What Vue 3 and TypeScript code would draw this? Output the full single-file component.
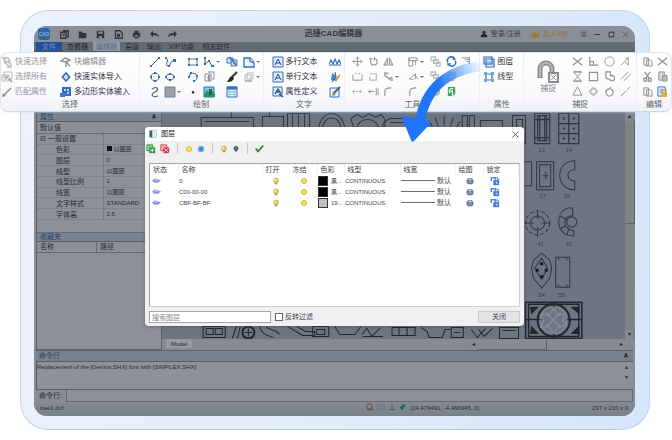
<script setup lang="ts">
import { h, ref } from 'vue'

interface Shape { d: string; s?: string; f?: string; w?: number }
interface Tool { icon: string; label: string; menu?: boolean }

const B = '#2f6fc0'
const G = '#8d8f92'
const L = '#b4b6b9'
const K = '#30343b'

const glyphs: Record<string, Shape[]> = {
  quick: [{ d: 'M2 2h5l2 3-4 1zM3 6l5 4M7 6l3 2v3H6', s: L, w: 1.4 }],
  all: [{ d: 'M3 1h8v7H3zM1 4h7v6H1z', s: L }, { d: 'M4 6h3M8 8l3 3', s: G, w: 1.4 }],
  match: [{ d: 'M3 9l7-7', s: G, w: 1.5 }, { d: 'M1 11l1-4 3 3z', f: G }],
  block: [{ d: 'M1 5l4-3 5 2-4 2zM6 5v6M6 6l4 4', s: G, w: 1.4 }],
  entity: [{ d: 'M6 2l3.5 4L6 10 2.5 6z', s: B, w: 1.8 }, { d: 'M5 5h2v2H5z', f: '#bcd8f5' }],
  poly4: [{ d: 'M2 1h9v9H2z', f: B }, { d: 'M4 3h2v2H4zM7 3h2v2H7zM7 6h2v2H7z', f: '#bcd8f5' }, { d: 'M0 7h5v4H0z', f: '#3c78c4' }],
  line: [{ d: 'M2.500 9.500L9.500 2.500', s: '#454b54' }, { d: 'M1 9h2v2H1zM9 1h2v2H9z', f: B }],
  pline: [{ d: 'M2 2c4 2-2 7 2 8 3 0 2-5 6-6', s: '#454b54' }, { d: 'M1 1h2v2H1zM9 3h3v3H9zM4 9h2v2H4z', f: B }],
  rect: [{ d: 'M2 3h8v6H2z', s: '#687684' }, { d: 'M1 2h2v2H1zM9 2h2v2H9zM1 8h2v2H1zM9 8h2v2H9z', f: B }],
  spline: [{ d: 'M2 2v6l4-3 3 5', s: '#454b54' }, { d: 'M1 1h2v2H1zM1 7h2v2H1zM5 4h2v2H5zM8 9h3v2H8z', f: B }],
  circle: [{ d: 'M6 2a4 4 0 1 0 .1 0', s: '#5a6570' }, { d: 'M5 1h2v2H5zM5 9h2v2H5zM1 5h2v2H1zM9 5h2v2H9z', f: B }],
  ellipse: [{ d: 'M6 3a4 3 0 1 0 .1 0', s: '#5a6570' }, { d: 'M5 2h2v2H5zM5 8h2v2H5zM1 5h2v2H1zM9 5h2v2H9z', f: B }],
  arc: [{ d: 'M2 6a4 4 0 1 1 5 4', s: '#5a6570' }, { d: 'M1 5h2v2H1zM3 1h2v2H3zM9 4h2v2H9zM6 9h2v2H6z', f: B }],
  region: [{ d: 'M2 3h6v7H2zM5 1h6v7H9', s: G }, { d: 'M4 5h3v3H4z', f: '#cfc9d9' }, { d: 'M6 4v6', s: '#777c94', w: 1.5 }],
  curve: [{ d: 'M3 3c5-4 8 1 3 3s-3 6 3 4', s: '#58616c', w: 1.2 }],
  hatch: [{ d: 'M1 1h10v10H1z', s: '#6887a5', f: '#9b9fa4' }],
  dot: [{ d: 'M6 5a1.300 1.300 0 1 0 .1 0', f: '#20242b' }],
  image: [{ d: 'M1 1h10v10H1z', s: B, f: '#7dc4e7' }, { d: 'M1 8l3-4 3 3 2-2 3 3v3H1z', f: '#2b9652' }, { d: 'M6 3h3v6H6z', f: '#246b3b' }],
  copy: [{ d: 'M1 2h6v5H1z', s: B, f: '#dbeaff' }, { d: 'M5 4h6v6H5z', s: '#687684', f: '#b8d5fb' }, { d: 'M3 1l4 4 3 4', s: B, w: 1.5 }],
  brush: [{ d: 'M11 1L6 6', s: K, w: 2 }, { d: 'M6 5l2 2c-1 3-3 4-7 4 2-2 2-5 5-6z', f: '#20242b' }],
  table: [{ d: 'M1 1h10v10H1z', s: B, f: '#e4f1ff' }, { d: 'M1 2h10', s: B, w: 3 }, { d: 'M1 6h10M1 8.500h10M4 3v8M8 3v8', s: '#76a9dd', w: .7 }],
  polygon: [{ d: 'M1 2h6v3l4 2v4H1z', s: B, f: '#eaf3ff', w: 1.3 }, { d: 'M7 1l4 5', s: '#5980aa' }],
  stack: [{ d: 'M4 2h6v6H4zM2 4h6v6H2z', s: L, f: '#fafafa' }, { d: 'M2 10h7', s: '#999999' }],
  mtext: [{ d: 'M1 1h10v10H1z', s: B, f: '#e0eeff' }, { d: 'M3 9l3-6 3 6M4 7h4', s: '#264d7b' }],
  attr: [{ d: 'M1 1h9v9H1z', s: B, f: '#e0eeff' }, { d: 'M3 8l3-5 3 5M4 6h3M7 8l4 3', s: '#264d7b', w: 1.3 }],
  aaa: [{ d: 'M0 8l2-4 2 4M4 8l2-5 2 5M8 8l2-4 2 4M0 9h12', s: B, w: 1.2 }],
  flame: [{ d: 'M3 2l3 2 1 6-5-1z', f: '#4b84c3' }, { d: 'M6 8l5-5v2L7 11z', f: '#c8963e' }, { d: 'M6 1l1 5-4 5', s: '#285787' }],
  note: [{ d: 'M1 2h9v9H1z', s: B, f: '#eaf3ff' }, { d: 'M4 8l7-7', s: '#56606b', w: 2 }, { d: 'M4 6l3 3-4 1z', f: '#7da84b' }],
  move: [{ d: 'M6 1v10M1 6h10M4 3l2-2 2 2M4 9l2 2 2-2M3 4L1 6l2 2M9 4l2 2-2 2', s: G }],
  rotate: [{ d: 'M3 3v4c0 4 7 4 7-1 0-2-1-3-3-3M7 1v4M1 3h4', s: G, w: 1.2 }],
  mirror: [{ d: 'M5 2v8H1zM7 2v8h4z', s: G, f: '#d3d4d5' }],
  scale: [{ d: 'M1 2h9v3H1zM1 2v9h4V5h3v5', s: G }],
  chain: [{ d: 'M1 1h5v4H1zM4 4h5v4H4zM7 7h4v4H7z', s: L, w: 1.3 }],
  sync: [{ d: 'M2 7a4 4 0 0 1 7-4M10 5a4 4 0 0 1-7 4', s: B, w: 1.7 }, { d: 'M8 0l3 4H7zM1 8h5l-4 3z', f: B }],
  align: [{ d: 'M1 2h9M4 4h6M9 1v8M6 6h3', s: G }],
  join: [{ d: 'M1 4v6h10V4M3 3h2M7 3h2', s: G }],
  breaks: [{ d: 'M2 3h7v7H2V6M4 3h4', s: L, w: 1.3 }],
  nodes: [{ d: 'M2 1v4l7 5M2 4l4-2M7 8l3-1', s: G, w: 1.3 }, { d: 'M1 1h3v3H1zM8 8h3v3H8z', f: L }],
  dim: [{ d: 'M1 9L8 3M2 9h4M7 4l4 5M8 3v6', s: G }],
  dash: [{ d: 'M0 6h3M4 6h3M8 6h3M2 4v4M9 4v4', s: L, w: 1.3 }],
  extend: [{ d: 'M0 6h7M9 2v8M3 4L1 6l2 2M11 3v7', s: G }],
  fillet: [{ d: 'M2 11V6c0-3 2-4 7-4', s: G, w: 1.2 }],
  refresh: [{ d: 'M2 1h8v10H2z', f: '#41a568' }, { d: 'M8 3C3 2 3 6 4 7l3-2v5h4', s: '#e9fff0', w: 1.3 }],
  layers: [{ d: 'M1 1h8v7H1zM3 3h8v8H3z', s: B, f: '#e9f3ff', w: 1.2 }, { d: 'M4 6h6M4 8h6', s: '#5a91cb' }],
  linetype: [{ d: 'M3 1v10M9 1v10M1 3h10M1 9h10', s: B, w: 1.2 }, { d: 'M1 1h3v3H1zM8 1h3v3H8zM1 8h3v3H1zM8 8h3v3H8z', f: '#6ba6df' }],
  cross: [{ d: 'M1 2l10 8M11 2L1 10', s: G, w: 1.3 }],
  perp: [{ d: 'M2 1v9h9M2 6h4v4', s: G, w: 1.2 }],
  round: [{ d: 'M6 1a5 5 0 1 0 .1 0', s: G }],
  angle: [{ d: 'M1 10l8-8v8M5 6l4 4M9 2l-3 1', s: G }],
  hour: [{ d: 'M2 1h8L2 11h8zM1 1h10M1 11h10', s: G }],
  square: [{ d: 'M1.500 1.500h9v9h-9z', s: G, w: 1.2 }],
  clover: [{ d: 'M2 6V1h5v4h3a3 3 0 1 1-4 4C4 9 2 8 2 6', s: G, w: 1.2 }],
  parallel: [{ d: 'M1 9l8-8M4 11l8-8', s: G }],
  triangle: [{ d: 'M6 1l5 9H1z', s: G }],
  diamond: [{ d: 'M6 1l5 5-5 5-5-5z', s: L }, { d: 'M6 3a3 3 0 1 0 .1 0', s: G }],
  tangent: [{ d: 'M6 3a4 4 0 1 0 .1 0', s: G, w: 1.3 }, { d: 'M1 6l7-5', s: G }],
  near: [{ d: 'M1 11L7 5M8 4l3-3', s: G }],
  paste: [{ d: 'M2 2h5v8H2zM5 4h4l2 2v5H5z', s: G, f: '#f4f4f4' }],
  cut: [{ d: 'M3 1l5 7M9 1L4 8M2 8h3v3H2zM7 8h3v3H7z', s: G, w: 1.3 }],
  clip: [{ d: 'M2 1h6v9H2z', s: G, f: '#d7d8d9' }, { d: 'M6 5h5v6H6z', s: G, f: '#bbbcbe' }],
  lockdoc: [{ d: 'M1 1h8v10H1z', s: B, f: '#e4f1ff' }, { d: 'M3 3h4v5H3z', f: '#8ab8e6' }, { d: 'M5 7h6v5H5z', f: '#e2ad29' }, { d: 'M6 7V4h4v3', s: '#c4973f' }],
  newf: [{ d: 'M1 3h7v8H1zM4 1h7v8H9', s: K, w: 1.8 }, { d: 'M3 6h4M5 5v4', s: K }],
  folder: [{ d: 'M1 2h4l1 2h5v7H1z', f: K }],
  save: [{ d: 'M1 1h10v10H1z', f: K }, { d: 'M3 2h6v3H3zM4 8h4v3H4z', f: '#858a93' }],
  saveas: [{ d: 'M2 1h6l3 3v7H2z', s: K, w: 1.7 }, { d: 'M4 5h4v4H4z', f: K }],
  print: [{ d: 'M3 1h6v3h2v5H9v2H3V9H1V4h2z', f: K }, { d: 'M4 7h4v2H4z', f: '#858a93' }],
  undo: [{ d: 'M0 5l4-4v3c5 0 7 1 8 6-2-3-4-3-8-3v3z', f: K }],
  redo: [{ d: 'M12 5L8 1v3C3 4 1 5 0 10c2-3 4-3 8-3v3z', f: K }],
  user: [{ d: 'M6 1a2.500 2.500 0 1 0 .1 0M1 11c0-5 3-5 5-5s5 0 5 5z', f: '#242932' }],
  vip: [{ d: 'M1 3l3 2 2-3 2 3 3-2v7H1z', f: '#a27432' }],
  menu: [{ d: 'M1 2h10M3 5h8M1 8h10M5 10h3', s: K }],
  min: [{ d: 'M1 6h10', s: K, w: 1.6 }],
  max: [{ d: 'M2 2h8v8H2z', s: K, w: 1.7 }],
  close: [{ d: 'M2 2l8 8M10 2l-8 8', s: '#4a4e54', w: 1.2 }],
  pin: [{ d: 'M4 1h4v5h2v2H2V6h2zM6 8v4', f: K, s: K, w: .6 }],
  addlayer: [{ d: 'M1 1h7v7H1z', s: '#278b3d', f: '#8ed39b' }, { d: 'M4 4h7v7H4z', f: '#269644' }, { d: 'M5 7.500h5M7.500 5v5', s: '#ffffff' }],
  dellayer: [{ d: 'M1 1h7v7H1z', s: '#cf3748', f: '#f2b6bd' }, { d: 'M4 4h7v7H4z', f: '#d6303e' }, { d: 'M5 5l5 5M10 5l-5 5', s: '#ffffff' }],
  sun: [{ d: 'M6 1.500a4.500 4.500 0 1 0 .1 0', f: '#d6ba27' }, { d: 'M6 3a3 3 0 1 0 .1 0', f: '#f5e453' }],
  freeze: [{ d: 'M2 2h8v8H2z', f: '#6baaf1' }, { d: 'M6 1v10M1 6h10M3 3l6 6M9 3L3 9', s: '#347fd1' }],
  bulb: [{ d: 'M6 1a4 4 0 0 0-3 7l1 3h4l1-3a4 4 0 0 0-3-7', f: '#cdbb62' }, { d: 'M5 2.500a2 2 0 1 0 .1 0', f: '#f8ee9b' }, { d: 'M4 10h4', s: '#858575' }],
  bulboff: [{ d: 'M6 1a4 4 0 0 0-3 6l3 4 3-4a4 4 0 0 0-3-6', f: '#5d6168' }, { d: 'M5 3h2v2H5z', f: '#969aa4' }],
  check: [{ d: 'M1 6l3 4 7-8', s: '#168a27', w: 2.3 }],
  status: [{ d: 'M0 6l4-3 8 3-4 3H3z', f: '#8397d3' }, { d: 'M2 5l3-1 4 2H4z', f: '#c4cff1' }],
  plot: [{ d: 'M3 2h6l2 3v4l-2 2H3L1 9V5z', f: '#637998' }, { d: 'M4 3h4v2H4zM3 7h6v1H3z', f: '#dce8f8' }],
  unlock: [{ d: 'M4 5h7v6H4z', f: '#3f79d3' }, { d: 'M1.500 6V2h5v4', s: '#4f8ce2', w: 1.8 }, { d: 'M8 2l3 3', s: '#6ea2e8', w: 2 }, { d: 'M7 7l2 2', s: '#d4e7ff', w: 1.4 }],
  app: [{ d: 'M1 1h10v10H1z', s: '#a4aab0', f: '#ffffff' }, { d: 'M1 1h4v10H1z', f: '#246c68' }, { d: 'M8 3v6', s: '#b7bdc4' }],
  magnify: [{ d: 'M5 1a4 4 0 1 0 .1 0', s: '#9b4140', w: 1.7 }, { d: 'M7 7l4 4M2 10h5', s: '#246e53', w: 2 }],
  gridbox: [{ d: 'M1 2h10v8H1zM1 5h10M1 8h10', s: '#696e76', w: .7 }],
  ortho: [{ d: 'M6 1v9M1 10h10', s: '#454a52' }],
  osnap: [{ d: 'M1 7l4 4 6-9-4 1-1-2z', f: '#176a58' }]
}

const Glyph = (p: { name: string; size?: number }) =>
  h('svg', { viewBox: '0 0 12 12', width: p.size ?? 12, height: p.size ?? 12, 'aria-hidden': 'true' },
    (glyphs[p.name] ?? []).map(g =>
      h('path', { d: g.d, fill: g.f ?? 'none', stroke: g.s ?? 'none', 'stroke-width': g.w ?? 1 })))
Glyph.props = ['name', 'size']

const t = (icon: string, label: string, menu = false): Tool => ({ icon, label, menu })

const quickBar = [t('newf', '新建'), t('folder', '打开'), t('save', '保存'), t('saveas', '另存为'), t('print', '打印'), t('undo', '撤销'), t('redo', '重做')]
const tabs = ['文件', '查看器', '编辑器', '高级', '输出', 'VIP功能', '相关软件']
const selectA = [t('quick', '快速选择'), t('all', '选择所有'), t('match', '匹配属性')]
const selectB = [t('block', '块编辑器'), t('entity', '快速实体导入'), t('poly4', '多边形实体输入')]
const draw = [
  t('line', '直线'), t('pline', '多段线'), t('rect', '矩形'), t('spline', '样条', true), t('copy', '复制块'), t('polygon', '多边形', true),
  t('circle', '圆'), t('ellipse', '椭圆'), t('arc', '圆弧'), t('region', '面域'), t('brush', '笔刷'), t('stack', '次序', true),
  t('curve', '曲线'), t('hatch', '填充', true), t('dot', '点'), t('image', '图像'), t('table', '表格')
]
const texts = [t('mtext', '多行文本'), t('mtext', '单行文本'), t('attr', '属性定义')]
const textTools = [t('aaa', '文字样式'), t('flame', '文字颜色'), t('note', '编辑文字')]
const tools = [
  t('move', '移动'), t('rotate', '旋转'), t('mirror', '镜像'), t('scale', '缩放', true), t('chain', '阵列'), t('sync', '同步'), t('align', '对齐'),
  t('join', '合并'), t('breaks', '打断'), t('nodes', '节点', true), t('dim', '标注', true), t('chain', '分解'), t('stack', '组合'), t('', ''),
  t('dash', '修剪'), t('extend', '延伸'), t('fillet', '圆角'), t('fillet', '倒角'), t('rotate', '重置'), t('refresh', '刷新')
]
const props = [t('layers', '图层'), t('linetype', '线型')]
const snaps = [
  t('cross', '交点'), t('perp', '垂足'), t('round', '圆心'), t('angle', '角度'),
  t('hour', '外观'), t('square', '端点'), t('clover', '插入点'), t('parallel', '平行'),
  t('triangle', '中点'), t('diamond', '象限点'), t('tangent', '切点'), t('near', '最近点')
]
const edits = [t('paste', '粘贴'), t('cross', '删除'), t('cut', '剪切'), t('clip', '剪贴板'), t('paste', '复制'), t('lockdoc', '锁定')]

const attrs = [
  ['色彩', '以图层'], ['图层', '0'], ['线型', '以图层'], ['线型比例', '1'],
  ['线宽', '以图层'], ['文字样式', 'STANDARD'], ['字体高', '2.5']
]
const columns = ['状态', '名称', '打开', '冻结', '色彩', '线型', '线宽', '绘图', '锁定']
const layers = [
  { name: '0', tone: 'black', color: '黑...' },
  { name: 'C00-00-00', tone: 'black', color: '黑...' },
  { name: 'CBF-BF-BF', tone: 'silver', color: '19...' }
]
const query = ref('')
const invert = ref(false)
const command = ref('')
</script>

<template>
  <main class="stage">
    <div class="frame">
      <div class="window">
        <header class="titlebar">
          <span class="logo">CAD</span>
          <nav class="quick">
            <button v-for="q in quickBar" :key="q.label" :aria-label="q.label"><Glyph :name="q.icon" :size="9" /></button>
          </nav>
          <h1>迅捷CAD编辑器</h1>
          <div class="account">
            <button class="login"><Glyph name="user" :size="8" />登录/注册</button>
            <button class="vip"><Glyph name="vip" :size="9" />加入VIP</button>
            <button aria-label="菜单"><Glyph name="menu" :size="7" /></button>
            <button aria-label="最小化"><Glyph name="min" :size="7" /></button>
            <button aria-label="最大化"><Glyph name="max" :size="7" /></button>
            <button aria-label="关闭窗口"><Glyph name="close" :size="7" /></button>
          </div>
        </header>

        <nav class="tabs">
          <button v-for="(tab, i) in tabs" :key="tab" :class="{ file: i === 0, active: i === 2 }">{{ tab }}</button>
        </nav>

        <section class="ribbon">
          <div class="group">
            <div class="body pick">
              <div class="stack off">
                <button v-for="x in selectA" :key="x.label"><Glyph :name="x.icon" />{{ x.label }}</button>
              </div>
              <div class="stack second">
                <button v-for="x in selectB" :key="x.label"><Glyph :name="x.icon" />{{ x.label }}</button>
              </div>
            </div>
            <h2>选择</h2>
          </div>
          <div class="group">
            <div class="body draw">
              <button v-for="x in draw" :key="x.label" :aria-label="x.label"><Glyph :name="x.icon" /><i v-if="x.menu" class="caret"></i></button>
            </div>
            <h2>绘制</h2>
          </div>
          <div class="group">
            <div class="body words">
              <div class="stack">
                <button v-for="x in texts" :key="x.label"><Glyph :name="x.icon" />{{ x.label }}</button>
              </div>
              <div class="stack">
                <button v-for="x in textTools" :key="x.label" :aria-label="x.label"><Glyph :name="x.icon" /></button>
              </div>
            </div>
            <h2>文字</h2>
          </div>
          <div class="group">
            <div class="body tools">
              <template v-for="(x, i) in tools" :key="i">
                <button v-if="x.icon" :aria-label="x.label"><Glyph :name="x.icon" :size="11" /><i v-if="x.menu" class="caret"></i></button>
                <span v-else></span>
              </template>
            </div>
            <h2>工具</h2>
          </div>
          <div class="group">
            <div class="body stack props">
              <button v-for="x in props" :key="x.label"><Glyph :name="x.icon" />{{ x.label }}</button>
            </div>
            <h2>属性</h2>
          </div>
          <div class="group">
            <div class="body snap">
              <button class="magnet">
                <svg viewBox="0 0 22 24" width="22" height="24" aria-hidden="true">
                  <path d="M3 18V9a6 6 0 0 1 12 0v9" fill="none" stroke="#898b8e" stroke-width="5" />
                  <path d="M3 17V9a6 6 0 0 1 12 0v8" fill="none" stroke="#b5b7b9" stroke-width="2" />
                  <path d="M12 13h9v9h-9z" fill="#f7f7f7" stroke="#898b8e" stroke-width="2" />
                  <path d="M14 15l5 5M19 15l-5 5" stroke="#898b8e" />
                </svg>
                捕捉
              </button>
              <div class="snap-grid">
                <button v-for="x in snaps" :key="x.label" :aria-label="x.label"><Glyph :name="x.icon" :size="11" /></button>
              </div>
            </div>
            <h2>捕捉</h2>
          </div>
          <div class="group">
            <div class="body edit">
              <button v-for="x in edits" :key="x.label" :aria-label="x.label"><Glyph :name="x.icon" :size="11" /></button>
            </div>
            <h2>编辑</h2>
          </div>
        </section>

        <div class="workspace">
          <aside class="side">
            <h3>属性<Glyph name="pin" :size="6" /></h3>
            <p class="preset">默认值</p>
            <table class="attrs">
              <tbody>
                <tr><th class="section">⊟ 一般设置</th><td></td></tr>
                <tr v-for="(a, i) in attrs" :key="a[0]">
                  <th>{{ a[0] }}</th>
                  <td><i v-if="i === 0" class="chip"></i>{{ a[1] }}</td>
                </tr>
              </tbody>
            </table>
            <h3 class="fav">收藏夹</h3>
            <div class="paths"><span>名称</span><span>路径</span></div>
          </aside>

          <div class="canvas">
            <svg class="drawing" viewBox="163 112 461 227" preserveAspectRatio="xMaxYMid slice" aria-hidden="true">
              <g fill="none" stroke="#30363f" stroke-width="1">
                <path d="M202 118h52v12h-52zM206 122h44M232 112v6M263 117h21v12h-21zM288 114h22v15h-22zM293 114v15M299 114v15M305 114v15M270 112v5M323 129c0-14 18-14 18 0M319 129c2-20 24-20 26 0M351 119l6-4 6 3 6-4 7 4 5-3 4 5-3 9h-28z" />
                <path d="M357 129c1-12 20-12 22 0M385 129v-7l5-3h14l5 4v6M390 123h14M433 129l-4-8M438 127l-3-9M444 126v-10M450 127l3-9M455 129l5-7M462 116h5v14h-5zM469 116h5v14h-5zM480 121h22v10h-22zM512 116h13v28h-13zM516 120h6v20h-6z" />
                <path d="M534 114h15v30h-15zM537 116h9v25h-9zM539 116v25M544 116v25M534 120h15M534 138h15" stroke-width="1.200" />
                <path d="M558 114h20v30h-20zM568 114v30M558 124h20M558 134h20" stroke-width="1.200" />
                <path d="M562 119h2M572 119h2M562 129h2M572 129h2M562 139h2M572 139h2" stroke-width="2" />
                <path d="M522 162h9v24h-9zM536 162h17v28h-17zM539 165h11v22h-11zM542 176h6M545 172v8M574 161c-20 0-20 29 0 29v-9c-9 0-9-11 0-11z" />
                <circle cx="537" cy="223" r="12" stroke-dasharray="4 2" /><circle cx="537" cy="223" r="7" />
                <path d="M537 210v9M537 227v10M524 223h9M541 223h9" />
                <circle cx="571" cy="222" r="5" />
                <path d="M567 208h5v8h-3a7 7 0 0 0-1 13l5 2v5c-8 0-15-5-15-14s4-12 9-14zM559 216l6 3M559 229l6-3M568 229l-2 6" />
                <path d="M541 253l8 7 2 8-2 10-8 10-8-10-2-10 2-8zM541 258l6 10-6 11-7-11zM555 257h14v30h-14zM558 257v3M566 257v3M558 284v3M566 284v3" />
                <path d="M541 262v3M541 275v3M535 270h3M544 270h3" stroke="#15191f" stroke-width="3" />
              </g>
              <g fill="none" stroke="#20262e">
                <path d="M525 302h56v36h-56zM528 304h50v32h-50zM525 319h17M566 319h15M553 302v6M553 332v7" stroke-width="1.500" />
                <circle cx="553" cy="320" r="16" stroke-width="2" /><circle cx="553" cy="320" r="13" stroke="#858b94" />
                <path d="M553 308l4 7 8-2-3 7 4 5-8 1-5 6-5-6-8 1 3-7-3-6 8 1zM545 312l15 15M560 312l-15 15" stroke="#8d939c" />
                <path d="M530 307h7l-6 6zM571 307h7v6zM530 333h7l-6-7zM571 333h7v-7z" fill="#20262e" />
                <path d="M204 326h22v11h-22zM207 328h7v6h-7zM216 328h7v6h-7zM237 326l-4 12M241 326l-3 12M260 326c2 8 8 9 14 11M267 326c3 5 9 2 13 8M288 326l15 9h11M297 326l9 5h9v6M313 326h16v10h-16zM317 329h8v5h-8zM335 326l5 8h15l6-8M362 334l5-6 5 8 8-8M363 336h20M392 327h23v8h-23zM399 327v8M407 327v8M421 327l6 4 2 6h13l3-8h5M451 327h12v10h-12zM454 332h6M471 329l6 8 8-9M478 329l6 7 8-8M499 327h19v11h-19zM502 330h13" />
                <circle cx="249" cy="332" r="6" stroke-width="2" /><path d="M245 332h8M249 328v8" />
              </g>
              <g class="marks">
                <text x="541" y="152">13</text><text x="568" y="152">14</text>
                <text x="542" y="198">17</text><text x="566" y="198">18</text>
                <text x="540" y="246">41</text><text x="568" y="246">42</text>
                <text x="541" y="297">54</text><text x="561" y="297">55</text>
              </g>
            </svg>
            <div class="vbar"><span>▴</span><i></i><span>▾</span></div>
            <div class="hbar"><button>Model</button><div><span>◂</span><i></i><span>▸</span></div></div>
          </div>
        </div>

        <section class="console">
          <h3>命令行<Glyph name="pin" :size="6" /></h3>
          <div class="log"><p>Replacement of the [Genius.SHX] font with [SIMPLEX.SHX]</p><span>▴<br />▾</span></div>
          <label class="prompt">命令行:<input v-model="command" type="text" /></label>
        </section>
        <footer class="status">
          <span>tree1.dxf</span>
          <div class="modes">
            <Glyph name="magnify" :size="8" /><Glyph name="gridbox" :size="8" /><Glyph name="ortho" :size="8" /><Glyph name="osnap" :size="8" />
            <span>(24.479491, -4.466946, 0)</span>
          </div>
          <span class="size">297 x 210 x 0</span>
        </footer>
      </div>
    </div>

    <section class="dialog" role="dialog" aria-labelledby="dlg-title">
      <header><Glyph name="app" :size="8" /><h2 id="dlg-title">图层</h2><button aria-label="关闭图层"><Glyph name="close" :size="9" /></button></header>
      <div class="dlg-tools">
        <button aria-label="新建图层"><Glyph name="addlayer" :size="10" /></button>
        <button aria-label="删除图层"><Glyph name="dellayer" :size="10" /></button>
        <i></i>
        <button aria-label="解冻"><Glyph name="sun" :size="8" /></button>
        <button aria-label="冻结"><Glyph name="freeze" :size="8" /></button>
        <i></i>
        <button aria-label="打开图层"><Glyph name="bulb" :size="8" /></button>
        <button aria-label="关闭图层显示"><Glyph name="bulboff" :size="8" /></button>
        <i></i>
        <button aria-label="设为当前"><Glyph name="check" :size="9" /></button>
      </div>
      <div class="list">
        <table>
          <colgroup><col v-for="(c, i) in columns" :key="c" :class="'c' + i" /></colgroup>
          <thead><tr><th v-for="c in columns" :key="c">{{ c }}</th></tr></thead>
          <tbody>
            <tr v-for="l in layers" :key="l.name">
              <td><Glyph class="state" name="status" :size="9" /></td>
              <td>{{ l.name }}</td>
              <td class="mid"><Glyph name="bulb" :size="8" /></td>
              <td class="mid"><Glyph name="sun" :size="8" /></td>
              <td><span class="tone"><i :class="l.tone"></i>{{ l.color }}</span></td>
              <td>CONTINUOUS</td>
              <td><span class="weight"><i></i>默认</span></td>
              <td class="mid"><Glyph name="plot" :size="8" /></td>
              <td class="lock"><Glyph name="unlock" :size="10" /></td>
            </tr>
          </tbody>
        </table>
      </div>
      <footer>
        <input v-model="query" class="search" type="text" placeholder="搜索图层" aria-label="搜索图层" />
        <label><input v-model="invert" type="checkbox" />反转过滤</label>
        <button>关闭</button>
      </footer>
    </section>

    <svg class="arrow" viewBox="0 0 84 84" width="84" height="84" aria-hidden="true">
      <defs>
        <linearGradient id="fade" gradientUnits="userSpaceOnUse" x1="82" y1="4" x2="38" y2="22">
          <stop offset="0" stop-color="#3a8af5" stop-opacity="0" />
          <stop offset="1" stop-color="#1f75fb" />
        </linearGradient>
      </defs>
      <path d="M82 6C48 10 25 28 20 62" fill="none" stroke="url(#fade)" stroke-width="10" />
      <path d="M3 56l26 5q3 1 1 3L14 81q-2 2-3-1L2 58q-1-2 1-2z" fill="#1f75fb" />
    </svg>
  </main>
</template>

<style>
body {
  margin: 0;
  background: #ffffff;
}
</style>

<style scoped>
* { box-sizing: border-box; }
.stage {
  position: relative;
  display: flex;
  height: 100vh;
  min-height: 440px;
  padding: 10px 22px 10px 20px;
  overflow: hidden;
  font-family: "Liberation Sans", "Noto Sans CJK SC", sans-serif;
  font-size: 7px;
  line-height: 10px;
  color: #262b33;
}
h1, h2, h3, p { margin: 0; font-size: inherit; font-weight: 400; }
i { font-style: normal; }
svg { display: block; flex: none; }
button {
  display: flex;
  align-items: center;
  padding: 0;
  border: 0;
  background: none;
  font: inherit;
  color: inherit;
  white-space: nowrap;
}
input { font: inherit; }
.frame {
  display: flex;
  flex: 1;
  min-width: 0;
  padding: 15px 14px 13px 13px;
  border: 1px solid #c9d4e2;
  border-bottom-color: #acd1f5;
  border-right-color: #b9d8f8;
  border-radius: 28px;
  background: linear-gradient(100deg, #ecf2fc, #e4edfb 50%, #d5e5fb);
}
.window {
  display: flex;
  flex: 1;
  flex-direction: column;
  min-width: 0;
  border-radius: 13px;
  background: #878c96;
}
.titlebar {
  display: grid;
  grid-template-columns: 1fr auto 1fr;
  align-items: center;
  height: 16px;
  padding: 0 6px 0 4px;
  border-radius: 13px 13px 0 0;
  background: #8a8e97;
}
.titlebar h1 { grid-column: 2; grid-row: 1; font-size: 8px; font-weight: 700; color: #343941; }
.logo {
  grid-column: 1;
  grid-row: 1;
  width: 12px;
  height: 12px;
  border-radius: 3px;
  background: #2f64a5;
  font-size: 5px;
  line-height: 12px;
  text-align: center;
  color: #a8c6ec;
}
.quick { display: flex; grid-column: 1; grid-row: 1; gap: 9px; padding-left: 22px; }
.account { display: flex; grid-column: 3; justify-content: flex-end; gap: 7px; }
.login, .vip { gap: 3px; }
.login { margin-right: 3px; color: #3a3f48; }
.vip { margin-right: 5px; color: #9b6f30; }
.tabs { display: flex; height: 10px; gap: 2px; padding-left: 2px; border-bottom: 1px solid #50565f; background: #656b75; }
.tabs button { padding: 0 3px; color: #252a32; }
.tabs .file { padding: 0 6px; background: #24508f; color: #6d96cf; }
.tabs .active { background: #9297a0; color: #5c6d88; }
.ribbon {
  position: relative;
  z-index: 1;
  display: grid;
  grid-template-columns: 139fr 124fr 82fr 135fr 44fr 113fr 34fr;
  flex: none;
  height: 60px;
  margin: 0 -37px 0 -34px;
  border: 1px solid #e1e6ed;
  border-bottom-color: #c5d8ed;
  border-radius: 8px;
  background: linear-gradient(#ffffff, #fafbfc 60%, #f0f3f7);
  box-shadow: 0 1px 2px #d1def066;
  font-size: 8px;
  color: #30343a;
}
.group { display: flex; flex-direction: column; min-width: 0; padding-top: 1px; border-right: 1px solid #eceff3; }
.group:last-child { border-right: 0; }
.group h2 { font-size: 8px; line-height: 12px; text-align: center; color: #62666b; }
.body { height: 45px; }
.group button { height: 15px; }
.stack { display: grid; grid-auto-rows: 15px; align-content: start; }
.stack button { gap: 2px; }
.off { color: #96999d; }
.second button:first-child { color: #85888c; }
.pick { display: grid; grid-template-columns: 59px 1fr; }
.draw { display: grid; grid-template-columns: 15px 23px 16px 23px 17px 20px; padding-left: 9px; }
.words { display: grid; grid-template-columns: 57px 1fr; padding-left: 8px; }
.tools { display: grid; grid-template-columns: 16px 15px 25px 22px 16px 15px 15px; padding-left: 7px; }
.props { padding-left: 3px; }
.snap { display: grid; grid-template-columns: 48px 1fr; }
.snap .magnet { flex-direction: column; justify-content: flex-end; width: 48px; height: 40px; }
.magnet { color: #85888c; }
.snap-grid { display: grid; grid-template-columns: repeat(4, 16px); }
.edit { display: grid; grid-template-columns: 15px 15px; padding-left: 5px; }
.caret { margin-left: 1px; border: 2px solid transparent; border-top-color: #73777d; border-bottom: 0; }
.workspace { display: flex; flex: 1; min-height: 0; }
.side { flex: none; width: 126px; margin-left: 2px; border: 1px solid #5d636d; border-top: 0; background: #8b9099; }
.side h3, .console h3 {
  display: flex;
  align-items: center;
  justify-content: space-between;
  height: 10px;
  padding: 0 4px 0 3px;
  border-bottom: 1px solid #565d68;
  background: #7b828d;
  color: #27436f;
}
.preset { height: 12px; padding: 1px 3px; border-bottom: 1px solid #656c77; }
.attrs { width: 100%; height: 86px; border-collapse: collapse; table-layout: fixed; line-height: 9px; }
.attrs th, .attrs td { padding: 0; border-bottom: 1px dotted #727984; text-align: left; font-weight: 400; white-space: nowrap; }
.attrs th { width: 66px; padding-left: 19px; border-right: 1px solid #737a84; }
.attrs .section { padding-left: 3px; }
.attrs td { padding-left: 3px; font-size: 6px; }
.chip { display: inline-block; width: 5px; height: 5px; margin-right: 2px; background: #0d1015; }
.side .fav { margin-top: 12px; border-top: 1px solid #656c77; }
.paths { display: grid; grid-template-columns: 60px 1fr; height: 11px; border-bottom: 1px solid #626975; }
.paths span { padding-left: 3px; border-right: 1px solid #626975; }
.canvas { display: grid; grid-template: 1fr 11px / 1fr 10px; flex: 1; min-width: 0; background: #6e7580; }
.drawing { width: 100%; height: 100%; min-height: 0; }
.marks { font-size: 6px; fill: #3b414b; text-anchor: middle; }
.vbar { display: flex; flex-direction: column; justify-content: space-between; background: #7d8486; }
.vbar span, .hbar span { width: 8px; height: 9px; background: #858a92; font-size: 6px; line-height: 9px; text-align: center; color: #171b21; }
.vbar i { flex: 1; margin-bottom: 106px; border-right: 1px solid #5b626c; border-bottom: 1px solid #5b626c; }
.hbar { display: flex; grid-column: 1 / 3; justify-content: space-between; background: #858a93; }
.hbar button { height: 9px; margin-left: 4px; padding: 0 5px; background: #969ba4; font-size: 6px; }
.hbar > div { display: flex; width: 35%; padding: 1px 10px 0 0; }
.hbar i { flex: 1; margin-right: 70px; border-right: 1px solid #555c66; border-bottom: 1px solid #666d77; }
.console { margin: 0 2px; border-top: 1px solid #5a616b; }
.console h3 { height: 11px; color: #333c4d; }
.log { display: flex; justify-content: space-between; height: 28px; padding-right: 5px; border-left: 1px solid #555c66; border-bottom: 1px solid #59606b; background: #8c919a; font-size: 6px; }
.prompt { display: flex; height: 12px; padding-left: 3px; gap: 4px; line-height: 12px; }
.prompt input { flex: 1; min-width: 0; padding: 0; border: 1px solid #646b76; border-top: 0; border-radius: 0; background: #8b9099; }
.status {
  display: grid;
  grid-template-columns: 326px 1fr auto;
  align-items: center;
  height: 14px;
  padding: 0 7px 2px 6px;
  border-radius: 0 0 13px 13px;
  background: linear-gradient(#858a93, #7a8089);
  font-size: 6px;
}
.modes { display: flex; gap: 3px; }
.dialog {
  position: absolute;
  top: 127px;
  right: 148px;
  left: 145px;
  z-index: 2;
  padding: 0 4px 2px;
  border-radius: 4px;
  background: #f0f0f0;
  box-shadow: 0 1px 3px #3a404666;
  color: #42454a;
}
.dialog header { display: flex; align-items: center; height: 14px; gap: 4px; margin: 0 -4px; padding: 0 4px; border-radius: 4px 4px 0 0; background: #ffffff; color: #222222; }
.dialog header button { margin-left: auto; }
.dlg-tools { display: flex; align-items: center; height: 15px; margin: 0 0 7px -3px; gap: 4px; }
.dlg-tools i { width: 1px; height: 11px; margin: 0 3px; background: #c6c6c6; }
.list { height: 144px; border: 1px solid #d0d0d0; border-top-color: #a2a5aa; border-left-color: #a2a5aa; background: #ffffff; }
.list table { width: 100%; border-collapse: collapse; table-layout: fixed; }
.list th, .list td { height: 11px; padding: 0 0 0 1px; text-align: left; font-weight: 400; line-height: 10px; white-space: nowrap; }
.list th { padding-left: 3px; border-right: 1px solid #f1f1f1; color: #3b3d41; }
.list td { font-size: 6px; }
.c0, .c3, .c7 { width: 28px; }
.c1 { width: 84px; }
.c2, .c4 { width: 27px; }
.c5 { width: 56px; }
.c6 { width: 55px; }
.state { margin-left: 1px; }
.mid svg { margin: 0 auto; }
.lock svg { margin-left: 6px; }
.tone, .weight { display: flex; align-items: center; }
.tone { gap: 3px; }
.tone i { flex: none; width: 10px; height: 10px; border: 1px solid #333333; background: #000000; }
.tone .silver { background: #bfbfbf; }
.weight { gap: 2px; font-size: 7px; }
.weight i { width: 34px; height: 1px; background: #6c6e72; }
.dialog footer { display: flex; align-items: center; height: 14px; margin-top: 3px; }
.dialog .search { width: 122px; height: 12px; padding: 0 2px; border: 1px solid #a6a6a6; border-radius: 0; background: #ffffff; }
.search::placeholder { color: #888888; }
.dialog footer label { display: flex; align-items: center; gap: 2px; margin-left: 4px; }
.dialog footer label input { appearance: none; width: 8px; height: 8px; margin: 0; border: 1px solid #666666; background: #ffffff; }
.dialog footer label input:checked { background: #2f6fc0; }
.dialog footer button { justify-content: center; width: 42px; height: 12px; margin-left: auto; border: 1px solid #cbcbcb; background: #e3e3e3; }
.arrow { position: absolute; top: 60px; left: 400px; z-index: 3; pointer-events: none; }
</style>
